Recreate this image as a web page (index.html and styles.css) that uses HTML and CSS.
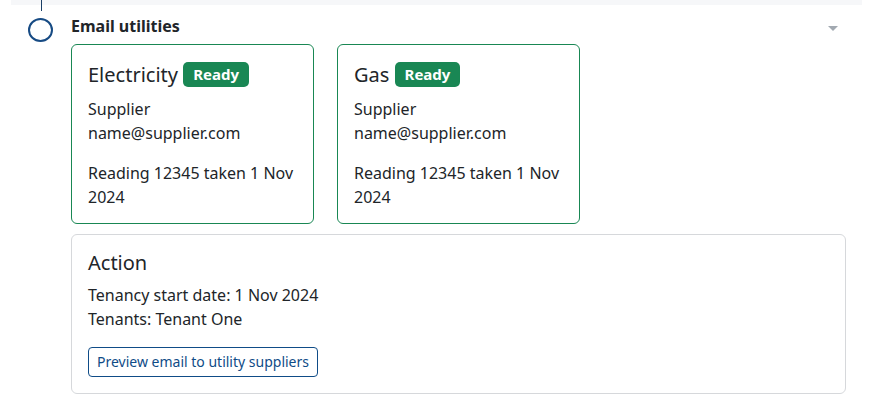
FILE: index.html
```html
<!DOCTYPE html>
<html lang="en">
<head>
<meta charset="utf-8">
<title>Email utilities</title>
<link rel="stylesheet" href="styles.css">
</head>
<body>
<div class="page">
  <div class="band"></div>
  <div class="item">
    <div class="marker">
      <div class="line"></div>
      <div class="circle"></div>
    </div>
    <div class="content">
      <div class="head">
        <div class="title">Email utilities</div>
        <div class="caret"></div>
      </div>
      <div class="cards">
        <div class="card ok">
          <div class="card-title">Electricity <span class="badge">Ready</span></div>
          <p class="txt">Supplier<br>name@supplier.com</p>
          <p class="txt last">Reading 12345 taken 1 Nov 2024</p>
        </div>
        <div class="card ok">
          <div class="card-title">Gas <span class="badge">Ready</span></div>
          <p class="txt">Supplier<br>name@supplier.com</p>
          <p class="txt last">Reading 12345 taken 1 Nov 2024</p>
        </div>
      </div>
      <div class="action">
        <div class="action-title">Action</div>
        <p class="txt">Tenancy start date: 1 Nov 2024<br>Tenants: Tenant One</p>
        <button class="btn">Preview email to utility suppliers</button>
      </div>
    </div>
  </div>
</div>
</body>
</html>
```

FILE: styles.css
```css
* { box-sizing: border-box; }
html, body { margin: 0; background: #fff; }
body {
  font-family: "Noto Sans", "Open Sans", sans-serif;
  color: #212529;
  font-size: 16px;
  line-height: 1.5;
}
.page { padding: 0 20px 0 11px; }
.band { height: 5px; background: #f6f7f9; }
.item { display: flex; }
.marker { width: 60px; flex: none; }
.line {
  width: 1px;
  height: 11px;
  margin-top: -5px;
  margin-left: 30px;
  background: #1b3f66;
}
.circle {
  width: 25px;
  height: 24px;
  margin-top: 7px;
  margin-left: 17px;
  border: 2.5px solid #174b84;
  border-radius: 50%;
}
.content { flex: 1; padding-right: 16px; }
.head {
  display: flex;
  align-items: center;
  justify-content: space-between;
  margin-top: 9px;
  height: 24px;
}
.title { font-weight: 700; font-size: 16px; line-height: 24px; }
.caret {
  width: 0; height: 0;
  margin-right: 8px;
  margin-top: 4px;
  border-left: 5px solid transparent;
  border-right: 5px solid transparent;
  border-top: 5px solid #a2a9b1;
}
.cards { display: flex; gap: 23.5px; margin-top: 6px; }
.card {
  width: 242.5px;
  border: 1px solid #198754;
  border-radius: 6px;
  padding: 16px 16px 14px;
}
.card-title {
  font-size: 20px;
  line-height: 28px;
  margin-bottom: 8px;
}
.badge {
  display: inline-block;
  vertical-align: 2px;
  background: #198754;
  color: #fff;
  font-weight: 700;
  font-size: 15px;
  line-height: 1;
  padding: 5px 10px 5px;
  border-radius: 5px;
}
.txt { margin: 0 0 16px; }
.txt.last { margin-bottom: 0; }
.action {
  margin-top: 10px;
  border: 1px solid #d6d8db;
  border-radius: 6px;
  padding: 16px;
}
.action-title { font-size: 20px; line-height: 24px; margin-bottom: 8px; }
.btn {
  font-family: inherit;
  font-size: 14px;
  line-height: 20px;
  color: #0f4c87;
  background: #fff;
  border: 1px solid #0f4c87;
  border-radius: 4px;
  padding: 4px 8px;
  display: block;
  cursor: pointer;
}
```
